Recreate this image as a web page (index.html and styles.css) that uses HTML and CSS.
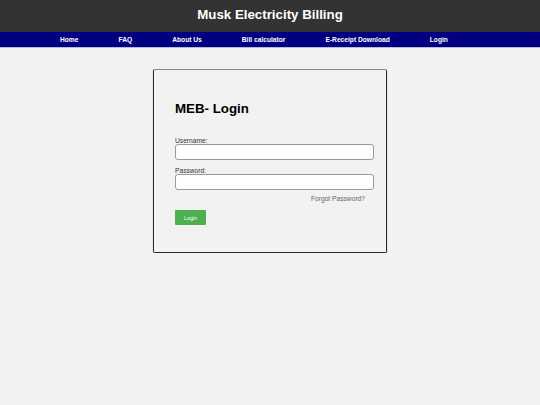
FILE: index.html
```html
<!DOCTYPE html>
<html lang="en">
<head>
    <meta charset="UTF-8">
    <meta name="viewport" content="width=device-width, initial-scale=1.0">
    <title>MEB - Login</title>
    <link rel="stylesheet" href="styles.css">
</head>
<body>

    <!-- header -->
    <header class="site-header">
        <h1>Musk Electricity Billing</h1>
    </header>

    <!-- navigation -->
    <nav class="main-nav">
        <ul>
            <li><a href="#">Home</a></li>
            <li><a href="#">FAQ</a></li>
            <li><a href="#">About Us</a></li>
            <li><a href="#">Bill calculator</a></li>
            <li><a href="#">E-Receipt Download</a></li>
            <li><a href="#">Login</a></li>
        </ul>
    </nav>

    <!-- login box -->
    <div class="login-box">
        <h2>MEB- Login</h2>
        <form id="login-form">
            <label for="username" class="first">Username:</label>
            <input type="text" id="username" name="username">
            <label for="password">Password:</label>
            <input type="password" id="password" name="password">
            <a href="#" class="forgot-link">Forgot Password?</a>
            <button type="submit">Login</button>
        </form>
    </div>

</body>
</html>
```

FILE: styles.css
```css
body {
    font-family: "Liberation Sans", Arial, sans-serif;
    margin: 0;
    padding: 0;
    background-color: #f2f2f2;
}
.site-header {
    background-color: #333;
    color: white;
    height: 32px;
    text-align: center;
}
.site-header h1 {
    margin: 0;
    font-size: 13.3px;
    line-height: 30px;
}
.main-nav {
    background-color: #000080;
    border-bottom: 1px solid #b8b8dc;
}
.main-nav ul {
    display: flex;
    list-style: none;
    margin: 0;
    padding: 0 0 0 40px;
}
.main-nav a {
    display: block;
    padding: 0 20px;
    color: white;
    font-size: 6.66px;
    font-weight: bold;
    line-height: 15px;
    text-decoration: none;
}
.login-box {
    width: 190px;
    margin: 21px auto 0;
    padding: 31px 21px 27px;
    border: 1px solid #2a2a2a;
    border-top-color: #8a8a8a;
    border-radius: 2px;
    box-shadow: 0 1px 2px rgba(0, 0, 0, 0.2);
}
.login-box h2 {
    margin: 0 0 21px;
    font-size: 13.3px;
    line-height: 15px;
}
.login-box label {
    display: block;
    font-size: 6.66px;
    line-height: 7px;
    color: #333;
    margin-top: 7px;
}
.login-box label.first {
    margin-top: 0;
}
.login-box input {
    display: block;
    width: 189px;
    height: 14px;
    padding: 0 4px;
    margin: 0;
    border: 1px solid #999;
    border-radius: 3px;
    background: white;
    box-sizing: content-box;
}
.forgot-link {
    display: block;
    margin-top: 5px;
    text-align: right;
    font-size: 6.66px;
    line-height: 8px;
    color: #666;
    text-decoration: none;
}
.login-box button {
    display: block;
    margin-top: 7px;
    width: 31px;
    height: 15px;
    padding: 0;
    background-color: #4CAF50;
    color: white;
    border: none;
    border-radius: 1px;
    font-family: "Liberation Sans", Arial, sans-serif;
    font-size: 5.3px;
    cursor: pointer;
}
```
